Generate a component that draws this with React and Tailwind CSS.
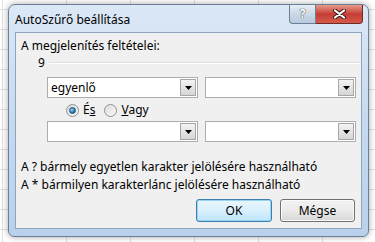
import React from 'react'

// Combo box with the classic Win7 dropdown button
function Combo({ value = '', width = 'w-[151px]' }) {
  return (
    <div className={`${width} h-[21px] bg-white border border-[#abadb3] flex items-center pl-[3px] pr-px`}>
      <span className="flex-1 text-[12px] leading-none text-black">{value}</span>
      <div className="w-[16px] h-[17px] border border-[#a6a6a6] bg-gradient-to-b from-[#f3f3f3] to-[#d6d6d6] flex items-center justify-center">
        <svg width="7" height="4" viewBox="0 0 7 4">
          <path d="M0 0h7L3.5 4z" fill="#000" />
        </svg>
      </div>
    </div>
  )
}

function Radio({ checked, children }) {
  return (
    <div className="flex items-center gap-[4px]">
      <div className="w-[13px] h-[13px] rounded-full border border-[#8e8f8f] bg-gradient-to-br from-[#dcdcdc] to-[#fbfbfb] flex items-center justify-center">
        {checked && (
          <div className="w-[7px] h-[7px] rounded-full bg-[radial-gradient(circle_at_35%_35%,#8fd6f5,#1b6d9b_70%)] border border-[#16507a]" />
        )}
      </div>
      <span className="text-[12px] leading-[16px] text-black">{children}</span>
    </div>
  )
}

export default function App() {
  return (
    <div
      className="w-[375px] h-[242px] overflow-hidden bg-white pt-[4px] pl-[8px] bg-[linear-gradient(#e0e0e0_1px,transparent_1px),linear-gradient(90deg,#e0e0e0_1px,transparent_1px)] bg-[size:64px_20px] bg-[position:2px_9px]"
      style={{ fontFamily: '"Noto Sans", "Open Sans", sans-serif' }}
    >
      {/* window frame */}
      <div className="w-[361px] h-[233px] rounded-t-[7px] rounded-b-[6px] border border-[#6a7f99] bg-gradient-to-b from-[#dbe8f6] via-[#c6daef] to-[#b9d1eb] shadow-[0_0_6px_rgba(0,0,0,0.35)] flex flex-col">
        {/* title bar */}
        <div className="h-[27px] flex items-start">
          <span className="pl-[6px] pt-[7px] text-[12px] leading-[16px] text-black">AutoSzűrő beállítása</span>
          <div className="ml-auto mr-[5px] flex">
            <div className="w-[27px] h-[19px] rounded-bl-[4px] border border-t-0 border-[#6f7f93] bg-gradient-to-b from-[#e7eef7] via-[#cbd8e7] to-[#b9cbe0] flex items-center justify-center">
              <span className="text-[12px] leading-none font-bold text-white [text-shadow:0_0_1px_#333,0_0_1px_#333]">?</span>
            </div>
            <div className="w-[47px] h-[19px] rounded-br-[4px] border border-l-0 border-t-0 border-[#6e2a27] bg-gradient-to-b from-[#e69a8a] via-[#c43d34] to-[#d65a4a] flex items-center justify-center">
              <svg width="13" height="10" viewBox="0 0 13 10">
                <path d="M2 1.5 L11 8.5 M11 1.5 L2 8.5" stroke="#3b1b19" strokeWidth="4" strokeLinecap="round" />
                <path d="M2 1.5 L11 8.5 M11 1.5 L2 8.5" stroke="#fff" strokeWidth="2.2" strokeLinecap="round" />
              </svg>
            </div>
          </div>
        </div>

        {/* client area */}
        <div className="mx-[6px] h-[197px] border border-[#8fa4bf] bg-[#f0f0f0] flex flex-col text-black">
          <div className="mt-[5px] pl-[5px] text-[12px] leading-[16px]">A megjelenítés feltételei:</div>

          <div className="mt-px h-[16px] flex items-center pl-[22px]">
            <span className="text-[12px] leading-[16px]">9</span>
            <div className="ml-[4px] flex-1 border-t border-[#d5dfe5] border-b-white border-b" />
          </div>

          <div className="mt-[6px] pl-[31px] flex gap-[7px]">
            <Combo value="egyenlő" />
            <Combo />
          </div>

          <div className="mt-[4px] pl-[50px] flex gap-[9px]">
            <Radio checked>É<span className="underline">s</span></Radio>
            <Radio><span className="underline">V</span>agy</Radio>
          </div>

          <div className="mt-[3px] pl-[31px] flex gap-[7px]">
            <Combo />
            <Combo />
          </div>

          <div className="mt-[16px] pl-[5px] text-[12px] leading-[18px]">
            <div>A ? bármely egyetlen karakter jelölésére használható</div>
            <div>A * bármilyen karakterlánc jelölésére használható</div>
          </div>

          <div className="mt-[5px] pr-[6px] flex justify-end gap-[8px]">
            <button className="w-[76px] h-[23px] rounded-[3px] border border-[#3c7fb1] bg-gradient-to-b from-[#eaf6fd] via-[#d9f0fc] to-[#bee6fd] text-[12px] leading-none text-black shadow-[inset_0_0_0_1px_#9ad4f3]">
              OK
            </button>
            <button className="w-[75px] h-[23px] rounded-[3px] border border-[#707070] bg-gradient-to-b from-[#f2f2f2] via-[#ebebeb] to-[#d6d6d6] text-[12px] leading-none text-black shadow-[inset_0_0_0_1px_#fcfcfc]">
              Mégse
            </button>
          </div>
        </div>
      </div>
    </div>
  )
}
